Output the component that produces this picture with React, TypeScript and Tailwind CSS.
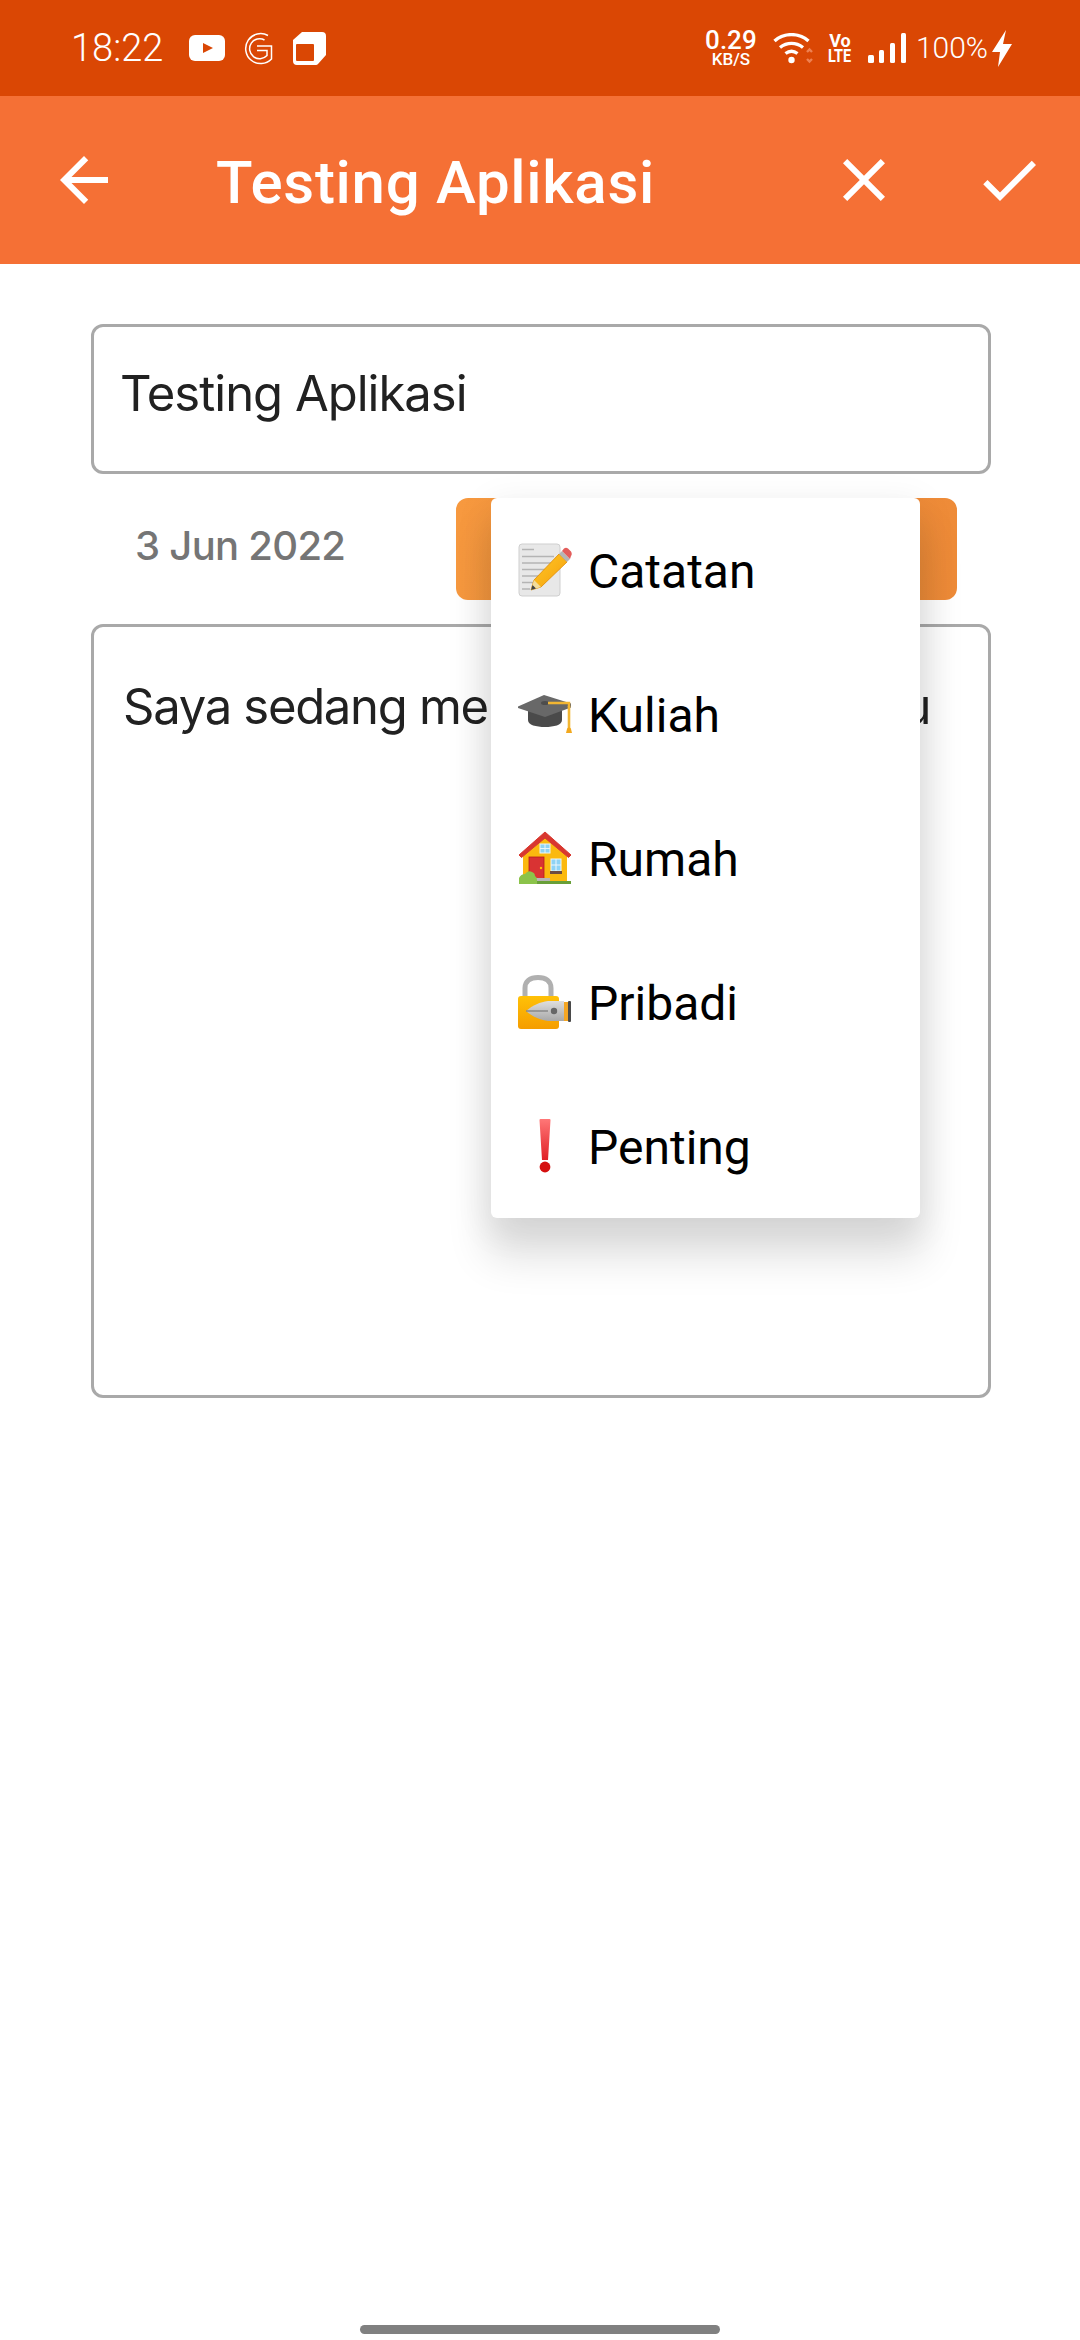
import React from "react";

const roboto = "font-['Roboto',sans-serif]";
const inter = "font-['Inter',sans-serif]";

const MemoEmoji = () => (
  <svg viewBox="0 0 54 54" className="h-[54px] w-[54px]">
    <defs>
      <linearGradient id="pencilBody" x1="0" y1="0" x2="1" y2="1">
        <stop offset="0" stopColor="#ffca28" />
        <stop offset="1" stopColor="#f59e0b" />
      </linearGradient>
    </defs>
    <rect x="1" y="1" width="41" height="52" rx="3" fill="#e8e8e8" stroke="#cfcfcf" strokeWidth="1" />
    <g stroke="#b4b4b4" strokeWidth="1.6">
      <path d="M4 6.5h12M4 13.5h32M4 20h32M4 26.5h32M4 33h26M4 39.5h16M4 46h8" />
    </g>
    <path d="M41 11 49 19 23 44 13 47 16 37Z" fill="url(#pencilBody)" stroke="#e08a00" strokeWidth="0.8" />
    <path d="M16 37 23 44 13 47Z" fill="#f3dc9b" />
    <path d="M14.5 42 18 45.5 13 47Z" fill="#424242" />
    <path d="M41 11 44 8 52 16 49 19Z" fill="#b5b5b5" />
    <path d="M44 8 46 5.5Q48 4 50 5.5L53 8.5Q54.5 11 53 13L52 16Z" fill="#e35d5b" />
  </svg>
);

const CapEmoji = () => (
  <svg viewBox="0 0 54 40" className="h-[40px] w-[54px]">
    <path d="M10 14v12c0 5 8 7 17 7s17-2 17-7V14Z" fill="#4a4a4a" />
    <path d="M0 12.5 26 1l27 8.5v4L27 23 0 14Z" fill="#686868" />
    <ellipse cx="27" cy="9" rx="4" ry="2" fill="#4d4d4d" />
    <path d="M30 9h21v4" fill="none" stroke="#f2b632" strokeWidth="2.4" />
    <path d="M51 12v22" stroke="#f2b632" strokeWidth="2.6" />
    <path d="M49 35c0-2 4-2 4 0l1 4h-6Z" fill="#f2a81d" />
  </svg>
);

const HouseEmoji = () => (
  <svg viewBox="0 0 54 54" className="h-[54px] w-[54px]">
    <path d="M5 25 27 6l22 19v27H5Z" fill="#fbb90f" />
    <path d="M1 24 27 1l26 23-2.5 2.5L27 7 3.5 26.5Z" fill="#d8372f" stroke="#d8372f" strokeWidth="1" strokeLinejoin="round" />
    <rect x="22" y="13" width="10" height="9" fill="#8fd3f4" stroke="#e9f5fb" strokeWidth="1" />
    <path d="M27 13v9M22 17.5h10" stroke="#e9f5fb" strokeWidth="1" />
    <rect x="11" y="26" width="15" height="22" fill="#d93333" stroke="#b71c1c" strokeWidth="0.8" />
    <circle cx="23" cy="37" r="1.2" fill="#ffc107" />
    <rect x="33" y="28" width="10" height="12" fill="#8fd3f4" stroke="#eef7fb" strokeWidth="1" />
    <path d="M38 28v12M33 34h10" stroke="#eef7fb" strokeWidth="1" />
    <rect x="32" y="40" width="12" height="3" fill="#6d4c41" />
    <rect x="17" y="47" width="15" height="5" fill="#b6b6b6" />
    <path d="M1 53v-3h52v3Z" fill="#689f38" />
    <path d="M1 53v-6q2-4 6-4 3-4 7-2 3 1 3 4 2 1 2 4v4Z" fill="#8bc34a" />
  </svg>
);

const LockEmoji = () => (
  <svg viewBox="0 0 54 54" className="h-[54px] w-[54px]">
    <defs>
      <linearGradient id="lockBody" x1="0" y1="0" x2="0" y2="1">
        <stop offset="0" stopColor="#ffc107" />
        <stop offset="1" stopColor="#f59d00" />
      </linearGradient>
      <linearGradient id="nib" x1="0" y1="0" x2="0" y2="1">
        <stop offset="0" stopColor="#dedede" />
        <stop offset="1" stopColor="#a8a8a8" />
      </linearGradient>
    </defs>
    <path d="M7 24V13C7 6 12 2.5 20 2.5s13 3.5 13 10.5v11" fill="none" stroke="#b0b0b0" strokeWidth="5" />
    <rect x="0" y="21" width="41" height="33" rx="3" fill="url(#lockBody)" />
    <path d="M8 36c7-6 14-9 22-10h16v20H30c-8-1-15-4-22-10Z" fill="url(#nib)" />
    <path d="M8 36h22" stroke="#7a7a7a" strokeWidth="1.2" />
    <circle cx="36" cy="36" r="3.2" fill="#666" />
    <rect x="46" y="27" width="4" height="19" fill="#f5a623" />
    <rect x="50" y="26" width="3" height="21" rx="1" fill="#4a4a4a" />
  </svg>
);

const BangEmoji = () => (
  <svg viewBox="0 0 12 54" className="h-[54px] w-[12px]">
    <defs>
      <linearGradient id="bang" x1="0" y1="0" x2="0" y2="1">
        <stop offset="0" stopColor="#f77" />
        <stop offset="1" stopColor="#e01f26" />
      </linearGradient>
    </defs>
    <path d="M1.5 0h9a1 1 0 0 1 1 1L9 41H3L.5 1a1 1 0 0 1 1-1Z" fill="url(#bang)" />
    <circle cx="6" cy="48" r="5.4" fill="#d50f0f" />
  </svg>
);

const items = [
  { label: "Catatan", icon: <MemoEmoji /> },
  { label: "Kuliah", icon: <CapEmoji /> },
  { label: "Rumah", icon: <HouseEmoji /> },
  { label: "Pribadi", icon: <LockEmoji /> },
  { label: "Penting", icon: <BangEmoji /> },
];

const StatusBar = () => (
  <div className={`flex h-24 items-center bg-[#da4704] pl-[71px] text-white ${roboto}`}>
    <span className="text-[38px] leading-none font-light">18:22</span>
    <svg viewBox="0 0 36 26" className="ml-[26px] h-[26px] w-[36px]">
      <rect x="0" y="0" width="36" height="26" rx="6" fill="#fff" />
      <path d="M14 8v10l10-5Z" fill="#da4704" />
    </svg>
    <svg viewBox="0 0 30 34" className="ml-[18px] h-[34px] w-[30px]" fill="none" stroke="#fff" strokeWidth="1.5">
      <path d="M25 4.5A15 15 0 1 0 28.5 28V15H14" />
      <path d="M21.5 9A10 10 0 1 0 24 24.5V19.5H14" />
    </svg>
    <svg viewBox="0 0 33 33" className="ml-[20px] h-[33px] w-[33px]">
      <path fillRule="evenodd" d="M9 0h20a4 4 0 0 1 4 4v19l-8 9a3 3 0 0 1-2 1H4a4 4 0 0 1-4-4V8Z M3 13v15a1 1 0 0 0 1 1h16a1 1 0 0 0 1-1V13a1 1 0 0 0-1-1H4a1 1 0 0 0-1 1Z" fill="#fff" />
    </svg>
    <div className="ml-auto flex w-[50px] flex-col items-center">
      <span className="text-[26px] leading-[20px] font-medium">0.29</span>
      <span className="mt-[2px] text-[17px] leading-[15px] font-medium">KB/S</span>
    </div>
    <svg viewBox="0 0 40 31" className="ml-[17px] h-[31px] w-[40px]" fill="none" stroke="#fff" strokeWidth="3.4">
      <path d="M1.5 8C11-.5 26-.5 35.5 8" />
      <path d="M7 14.5c7-5.5 16-5.5 23 0" />
      <path d="M12.5 20.5c4-3 8-3 12 0" />
      <circle cx="18.5" cy="27" r="3.2" fill="#fff" stroke="none" />
      <path d="M34 19l2.5-2.5 2.5 2.5M34 26l2.5 2.5 2.5-2.5" stroke="#ee8152" strokeWidth="2.4" />
    </svg>
    <div className="ml-[15px] flex w-[24px] flex-col items-center text-[18px] leading-[15px] font-bold">
      <span>Vo</span>
      <span className="scale-x-80">LTE</span>
    </div>
    <svg viewBox="0 0 38 30" className="ml-[16px] h-[30px] w-[38px]" fill="#fff">
      <rect x="0" y="22" width="6" height="8" rx="1.5" />
      <rect x="11" y="17" width="5" height="13" rx="1.5" />
      <rect x="22" y="10" width="5" height="20" rx="1.5" />
      <rect x="33" y="0" width="5" height="30" rx="1.5" />
    </svg>
    <span className="ml-[10px] text-[30px] leading-none font-light">100%</span>
    <svg viewBox="0 0 20 37" className="mr-[68px] ml-[4px] h-[37px] w-[20px]" fill="#fff">
      <path d="M14 0 0 22h8L6 37 20 14h-9Z" />
    </svg>
  </div>
);

const AppBar = () => (
  <div className={`flex h-[168px] items-center bg-[#f57035] pl-12 text-white ${roboto}`}>
    <svg viewBox="0 0 24 24" className="h-[72px] w-[72px]" fill="#fff">
      <path d="M20 11H7.83l5.59-5.59L12 4l-8 8 8 8 1.41-1.41L7.83 13H20v-2z" />
    </svg>
    <span className="mt-[6px] ml-[96px] text-[60px] leading-none font-medium tracking-[0.7px]">Testing Aplikasi</span>
    <svg viewBox="0 0 24 24" className="ml-auto h-[72px] w-[72px]" fill="#fff">
      <path d="M19 6.41L17.59 5 12 10.59 6.41 5 5 6.41 10.59 12 5 17.59 6.41 19 12 13.41 17.59 19 19 17.59 13.41 12z" />
    </svg>
    <svg viewBox="0 0 24 24" className="mr-[35px] ml-[73px] h-[72px] w-[72px]" fill="#fff">
      <path d="M9 16.17L4.83 12l-1.42 1.41L9 19 21 7l-1.41-1.41z" />
    </svg>
  </div>
);

const App = () => {
  return (
    <div className="relative flex h-[2340px] w-[1080px] flex-col overflow-hidden bg-white">
      <StatusBar />
      <AppBar />

      <div className="flex flex-col pt-[60px] pr-[89px] pl-[91px]">
        <div className="flex h-[150px] items-start rounded-[12px] border-[3px] border-[#a9a9a9] pt-[38px] pl-[26px]">
          <span className={`text-[49px] leading-[58px] tracking-[-1px] text-[#212121] ${inter}`}>Testing Aplikasi</span>
        </div>

        <div className="mt-[24px] flex h-[102px] items-center">
          <span className={`mb-[6px] ml-[44px] text-[40px] font-medium tracking-[-0.7px] text-[#757575] ${inter}`}>3 Jun 2022</span>
          <div className="mr-[34px] ml-auto h-full w-[501px] rounded-[12px] bg-gradient-to-r from-[#f7993f] to-[#ee8b38]" />
        </div>

        <div className="mt-[24px] h-[774px] w-[900px] rounded-[12px] border-[3px] border-[#a9a9a9] pt-[51px] pl-[29px]">
          <span className={`block w-[860px] overflow-hidden text-[49px] leading-[58px] tracking-[-1.3px] whitespace-nowrap text-[#212121] ${inter}`}>
            Saya sedang mengerjakan tugas situ
          </span>
        </div>
      </div>

      <div className={`absolute top-[498px] left-[491px] flex w-[429px] flex-col rounded-[6px] bg-white shadow-[0_36px_42px_4px_rgba(0,0,0,0.12),0_9px_36px_4px_rgba(0,0,0,0.07)] ${roboto}`}>
        {items.map((item) => (
          <div key={item.label} className="flex h-36 items-center pl-[27px]">
            <div className="flex w-[54px] justify-center">{item.icon}</div>
            <span className="mt-[4px] ml-[16px] text-[48px] leading-none text-black">{item.label}</span>
          </div>
        ))}
      </div>

      <div className="absolute bottom-[6px] left-[360px] h-[9px] w-[360px] rounded-full bg-[#808080]" />
    </div>
  );
};

export default App;
